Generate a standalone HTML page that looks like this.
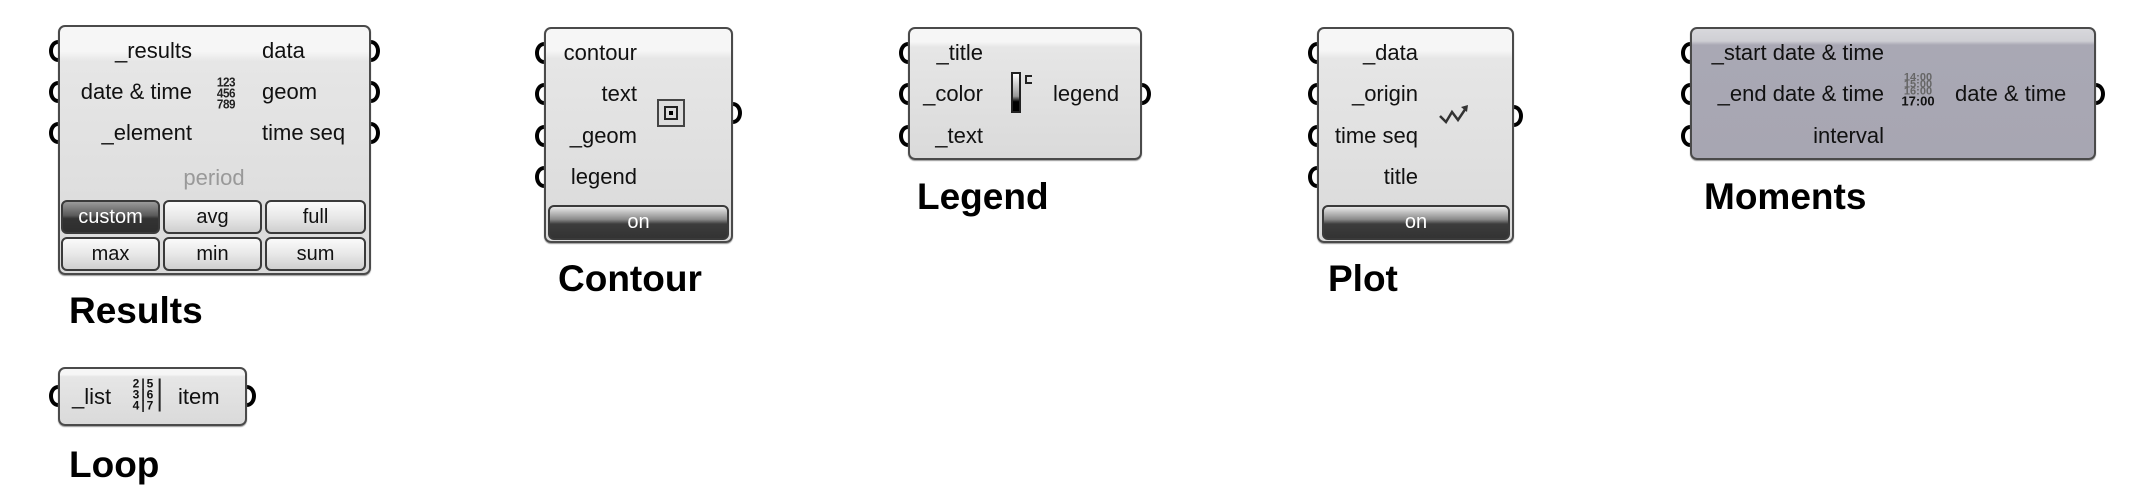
<!DOCTYPE html>
<html><head><meta charset="utf-8"><style>
body{margin:0;width:2134px;height:494px;background:#fff;position:relative;overflow:hidden;font-family:"Liberation Sans",sans-serif;}
.box{position:absolute;border:2px solid #4a4a4a;border-radius:7px;box-sizing:border-box;background:linear-gradient(#f6f6f6 0,#f6f6f6 10%,#e6e6e6 14%,#dadada 100%);z-index:2;box-shadow:0 1px 1px #999;}
.p{position:absolute;width:10px;height:14px;border:4.5px solid #000;border-radius:50%;background:#fff;transform:translate(-50%,-50%);z-index:1;}
.t{position:absolute;font-size:22px;line-height:26px;color:#111;white-space:nowrap;transform:translateY(-50%);z-index:3;}
.r{transform:translate(-100%,-50%);}
.lb{position:absolute;font-weight:bold;font-size:37px;line-height:40px;color:#000;transform:translateY(-50%);}
.btn{position:absolute;box-sizing:border-box;border:2px solid #3a3a3a;border-radius:6px;background:linear-gradient(#fafafa,#e8e8e8 50%,#cfcfcf);font-size:20px;text-align:center;color:#111;z-index:3;}
.dk{background:linear-gradient(#9a9a9a,#5a5a5a 45%,#333 55%,#2e2e2e);color:#fff;}
.on{background:linear-gradient(#e8e8e8,#8a8a8a 40%,#3c3c3c 55%,#333);color:#fff;}
</style></head><body>

<!-- Results -->
<div class="box" style="left:58px;top:25px;width:313px;height:250px"></div>
<div class="p" style="left:58px;top:51px"></div><div class="p" style="left:58px;top:92px"></div><div class="p" style="left:58px;top:133px"></div>
<div class="p" style="left:371px;top:51px"></div><div class="p" style="left:371px;top:92px"></div><div class="p" style="left:371px;top:133px"></div>
<div class="t r" style="left:192px;top:51px">_results</div>
<div class="t r" style="left:192px;top:92px">date &amp; time</div>
<div class="t r" style="left:192px;top:133px">_element</div>
<div class="t" style="left:262px;top:51px">data</div>
<div class="t" style="left:262px;top:92px">geom</div>
<div class="t" style="left:262px;top:133px">time seq</div>
<div class="t" style="left:226px;top:93px;font-size:13px;line-height:11px;font-weight:bold;transform:translate(-50%,-50%) scaleX(0.9);letter-spacing:-0.5px;text-align:center;color:#222">123<br>456<br>789</div>
<div class="t" style="left:214px;top:178px;color:#999;transform:translate(-50%,-50%)">period</div>
<div class="btn dk" style="left:61px;top:200px;width:99px;height:34px;line-height:30px">custom</div>
<div class="btn" style="left:163px;top:200px;width:99px;height:34px;line-height:30px">avg</div>
<div class="btn" style="left:265px;top:200px;width:101px;height:34px;line-height:30px">full</div>
<div class="btn" style="left:61px;top:237px;width:99px;height:34px;line-height:30px">max</div>
<div class="btn" style="left:163px;top:237px;width:99px;height:34px;line-height:30px">min</div>
<div class="btn" style="left:265px;top:237px;width:101px;height:34px;line-height:30px">sum</div>
<div class="lb" style="left:69px;top:311px">Results</div>

<!-- Contour -->
<div class="box" style="left:544px;top:27px;width:189px;height:216px"></div>
<div class="p" style="left:544px;top:53px"></div><div class="p" style="left:544px;top:94px"></div><div class="p" style="left:544px;top:136px"></div><div class="p" style="left:544px;top:177px"></div>
<div class="p" style="left:733px;top:113px"></div>
<div class="t r" style="left:637px;top:53px">contour</div>
<div class="t r" style="left:637px;top:94px">text</div>
<div class="t r" style="left:637px;top:136px">_geom</div>
<div class="t r" style="left:637px;top:177px">legend</div>
<div style="position:absolute;left:657px;top:99px;width:28px;height:28px;box-sizing:border-box;border:2px solid #444;z-index:3;background:#ddd"><div style="position:absolute;left:5px;top:5px;width:14px;height:14px;box-sizing:border-box;border:2px solid #222"><div style="position:absolute;left:3px;top:3px;width:4px;height:4px;background:#000"></div></div></div>
<div class="btn on" style="left:548px;top:205px;width:181px;height:35px;line-height:31px">on</div>
<div class="lb" style="left:558px;top:279px">Contour</div>

<!-- Legend -->
<div class="box" style="left:908px;top:27px;width:234px;height:133px"></div>
<div class="p" style="left:908px;top:53px"></div><div class="p" style="left:908px;top:94px"></div><div class="p" style="left:908px;top:136px"></div>
<div class="p" style="left:1142px;top:94px"></div>
<div class="t r" style="left:983px;top:53px">_title</div>
<div class="t r" style="left:983px;top:94px">_color</div>
<div class="t r" style="left:983px;top:136px">_text</div>
<div class="t" style="left:1053px;top:94px">legend</div>
<div style="position:absolute;left:1011px;top:72px;width:10px;height:41px;box-sizing:border-box;border:2px solid #222;background:linear-gradient(#fff,#999 60%,#000 75%);z-index:3"></div>
<div style="position:absolute;left:1025px;top:75px;width:5px;height:5px;border:2px solid #222;border-right:none;z-index:3"></div>
<div class="lb" style="left:917px;top:197px">Legend</div>

<!-- Plot -->
<div class="box" style="left:1317px;top:27px;width:197px;height:216px"></div>
<div class="p" style="left:1317px;top:53px"></div><div class="p" style="left:1317px;top:94px"></div><div class="p" style="left:1317px;top:136px"></div><div class="p" style="left:1317px;top:177px"></div>
<div class="p" style="left:1514px;top:116px"></div>
<div class="t r" style="left:1418px;top:53px">_data</div>
<div class="t r" style="left:1418px;top:94px">_origin</div>
<div class="t r" style="left:1418px;top:136px">time seq</div>
<div class="t r" style="left:1418px;top:177px">title</div>
<svg style="position:absolute;left:1438px;top:102px;z-index:3" width="34" height="26" viewBox="0 0 34 26"><path d="M2 14 L8 20 L14 10 L20 18 L28 6" fill="none" stroke="#333" stroke-width="2.5"/><path d="M23 5 L30 3 L29 10 Z" fill="#333"/></svg>
<div class="btn on" style="left:1322px;top:205px;width:188px;height:35px;line-height:31px">on</div>
<div class="lb" style="left:1328px;top:279px">Plot</div>

<!-- Moments -->
<div class="box" style="left:1690px;top:27px;width:406px;height:133px;background:linear-gradient(#d8d8dc 0,#cfcfd4 12px,#a9a8b4 16px,#a7a6b2 100%)"></div>
<div class="p" style="left:1690px;top:53px"></div><div class="p" style="left:1690px;top:94px"></div><div class="p" style="left:1690px;top:136px"></div>
<div class="p" style="left:2096px;top:94px"></div>
<div class="t r" style="left:1884px;top:53px">_start date &amp; time</div>
<div class="t r" style="left:1884px;top:94px">_end date &amp; time</div>
<div class="t r" style="left:1884px;top:136px">interval</div>
<div class="t" style="left:1955px;top:94px">date &amp; time</div>
<div class="t" style="left:1918px;top:91px;font-size:11px;line-height:7px;font-weight:bold;color:#666;transform:translate(-50%,-50%);text-align:center">14:00<br>15:00<br>16:00<br><span style="color:#111;font-size:13px;line-height:12px">17:00</span></div>
<div class="lb" style="left:1704px;top:197px">Moments</div>

<!-- Loop -->
<div class="box" style="left:58px;top:367px;width:189px;height:59px"></div>
<div class="p" style="left:58px;top:396px"></div><div class="p" style="left:247px;top:396px"></div>
<div class="t" style="left:72px;top:397px">_list</div>
<div class="t" style="left:178px;top:397px">item</div>
<div class="t" style="left:145px;top:395px;font-size:12px;line-height:11px;font-weight:bold;transform:translate(-50%,-50%);text-align:center;border-right:2px solid #222;padding:0 3px;letter-spacing:2px">2|5<br>3|6<br>4|7</div>
<div class="lb" style="left:69px;top:465px">Loop</div>
</body></html>
